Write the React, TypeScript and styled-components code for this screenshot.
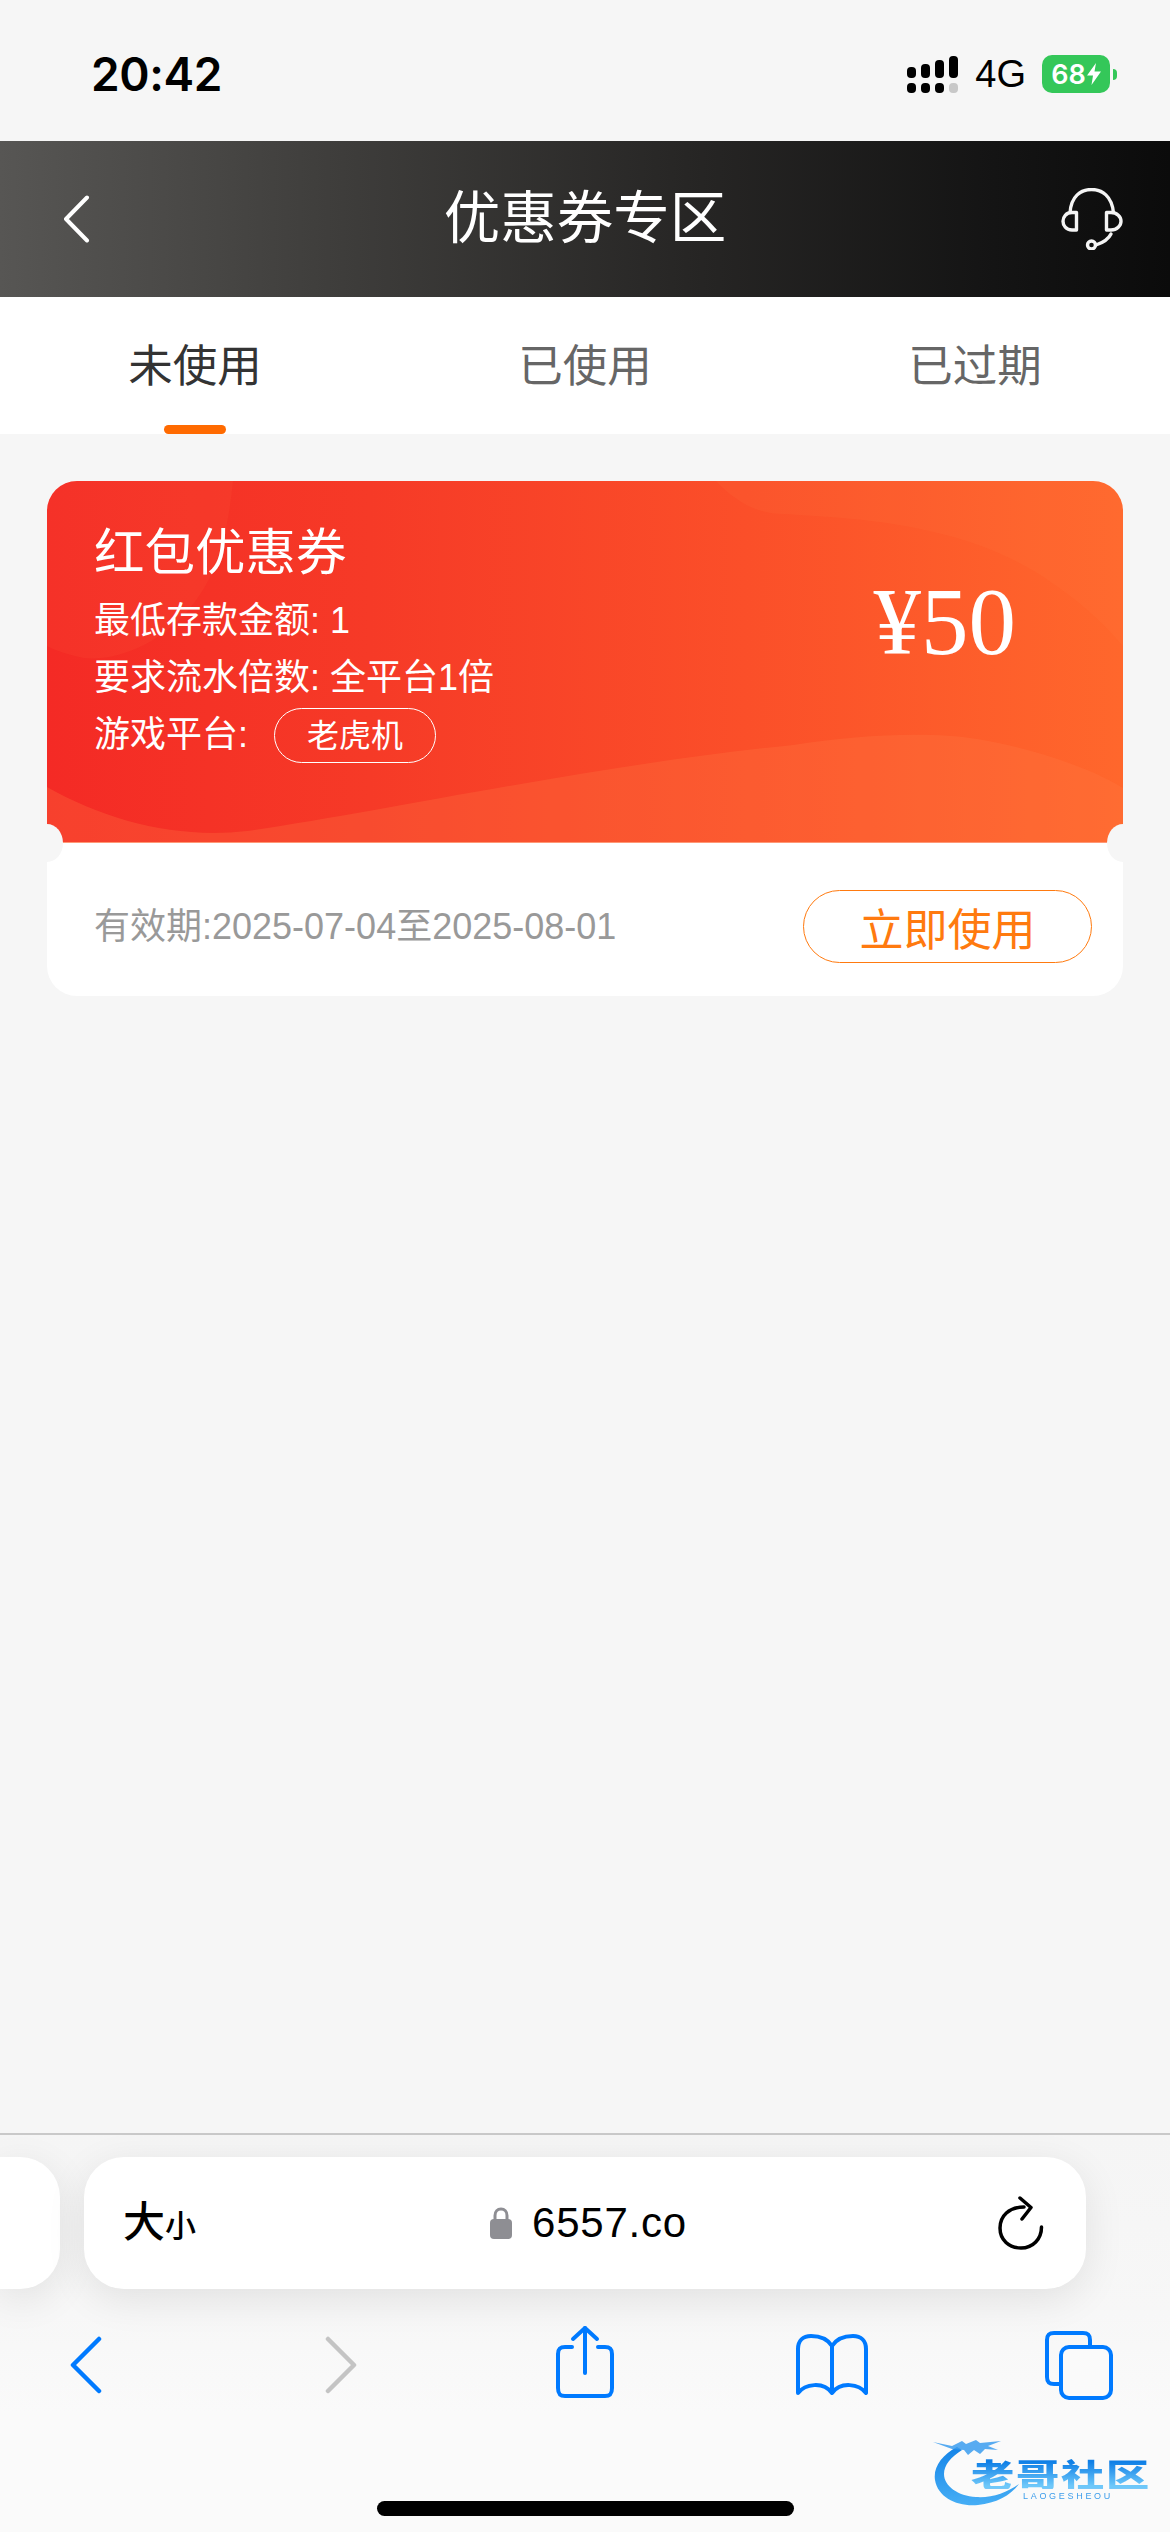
import * as React from 'react'
import styled, { createGlobalStyle } from 'styled-components'

const CJK = `"Liberation Sans", "Noto Sans CJK SC", sans-serif`

const GlobalStyle = createGlobalStyle`
  html, body {
    margin: 0;
    padding: 0;
    background: #f6f6f6;
  }
  * {
    box-sizing: border-box;
  }
`

const Page = styled.div`
  width: 1170px;
  height: 2532px;
  display: flex;
  flex-direction: column;
  position: relative;
  overflow: hidden;
  background: #f6f6f6;
  font-family: ${CJK};
`

const StatusBar = styled.div`
  height: 141px;
  flex: none;
  display: flex;
  align-items: center;
  justify-content: space-between;
  padding: 7px 60px 0 91px;
`

const Clock = styled.div`
  font-family: Inter, sans-serif;
  font-size: 46px;
  font-weight: 600;
  color: #000;
  letter-spacing: -0.4px;
`

const StatusRight = styled.div`
  display: flex;
  align-items: center;
`

const NetworkLabel = styled.span`
  font-size: 38px;
  color: #000;
  margin: 0 16px 0 17px;
  line-height: 38px;
`

const Battery = styled.div`
  width: 68px;
  height: 38px;
  border-radius: 10px;
  background: #34c759;
  position: relative;
  display: flex;
  align-items: center;
  justify-content: center;
  gap: 1px;
  color: #fff;
  font-family: Inter, sans-serif;
  font-size: 27px;
  font-weight: 600;

  &::after {
    content: '';
    position: absolute;
    right: -7px;
    top: 14px;
    width: 4px;
    height: 11px;
    border-radius: 0 5px 5px 0;
    background: #34c759;
  }
`

const Header = styled.header`
  height: 156px;
  flex: none;
  display: grid;
  grid-template-columns: 1fr auto 1fr;
  align-items: center;
  padding: 0 47px;
  background: linear-gradient(90deg, #575654 0%, #3f3e3c 28%, #262524 60%, #141414 85%, #0b0b0b 100%);
`

const HeaderSlot = styled.div<{ $end?: boolean }>`
  display: flex;
  justify-content: ${p => (p.$end ? 'flex-end' : 'flex-start')};
  padding-left: ${p => (p.$end ? 0 : 15)}px;
`

const HeaderTitle = styled.h1`
  margin: 0;
  font-size: 56.5px;
  font-weight: 400;
  color: #fff;
  line-height: 1;
`

const Tabs = styled.nav`
  height: 137px;
  flex: none;
  display: grid;
  grid-template-columns: repeat(3, 390px);
  background: #fff;
`

const Tab = styled.div<{ $active?: boolean }>`
  position: relative;
  display: flex;
  align-items: center;
  justify-content: center;
  padding-bottom: 6px;
  font-size: 44.5px;
  color: ${p => (p.$active ? '#333' : '#666')};

  ${p =>
    p.$active &&
    `&::after {
      content: '';
      position: absolute;
      left: 164px;
      bottom: 0;
      width: 62px;
      height: 9px;
      border-radius: 5px;
      background: #ff6a00;
    }`}
`

const Content = styled.main`
  flex: 1;
  padding: 47px 47px 0;
`

const Coupon = styled.section`
  position: relative;
  height: 515px;
  border-radius: 30px;
  overflow: hidden;
  display: flex;
  flex-direction: column;
  background: #fff;
`

const Notch = styled.span<{ $side: 'left' | 'right' }>`
  position: absolute;
  top: 343px;
  ${p => p.$side}: -16px;
  width: 32px;
  height: 38px;
  border-radius: 50%;
  background: #f6f6f6;
`

const CouponTop = styled.div`
  position: relative;
  height: 362px;
  flex: none;
  display: flex;
  justify-content: space-between;
  padding: 43px 107px 0 47px;
  color: #fff;
  background: linear-gradient(90deg, #f42a25 0%, #f63a27 30%, #fb4f29 65%, #ff672c 100%);
  border-bottom: 1px solid #ffa489;
`

const Waves = styled.svg`
  position: absolute;
  left: 0;
  top: 0;
  width: 1076px;
  height: 362px;
`

const CouponInfo = styled.div`
  position: relative;
  display: flex;
  flex-direction: column;
`

const CouponName = styled.div`
  font-size: 50.5px;
  line-height: 58px;
  margin-bottom: 21px;
`

const CouponLine = styled.div`
  font-size: 36px;
  line-height: 36px;
  height: 57px;
  display: flex;
  align-items: flex-start;
  white-space: pre;
`

const PlatformTag = styled.span`
  width: 162px;
  height: 55px;
  margin: -9px 0 0 26px;
  border: 1px solid #fff;
  border-radius: 28px;
  display: flex;
  align-items: center;
  justify-content: center;
  font-size: 32px;
`

const Amount = styled.div`
  position: relative;
  font-family: "Liberation Serif", serif;
  font-size: 95px;
  line-height: 95px;
  margin-top: 51px;
`

const CouponBottom = styled.div`
  flex: 1;
  display: flex;
  align-items: center;
  justify-content: space-between;
  padding: 14px 31px 0 47px;
`

const Validity = styled.span`
  font-size: 36px;
  color: #999;
  margin-bottom: 8px;
`

const UseButton = styled.button`
  width: 289px;
  height: 73px;
  padding: 0;
  border: 1px solid #ff7a0f;
  border-radius: 37px;
  background: #fff;
  color: #ff7a0f;
  font-family: inherit;
  font-size: 44px;
`

const Toolbar = styled.footer`
  height: 399px;
  flex: none;
  border-top: 2px solid #c9c9c9;
  background: linear-gradient(180deg, #f5f5f5 0%, #f7f7f7 45%, #fafafa 70%);
  display: flex;
  flex-direction: column;
`

const UrlRow = styled.div`
  height: 132px;
  margin-top: 22px;
  flex: none;
  display: grid;
  grid-template-columns: 60px 1002px;
  gap: 24px;
`

const SidePill = styled.div`
  border-radius: 0 40px 40px 0;
  background: #fff;
  box-shadow: 0 10px 40px rgba(0, 0, 0, 0.09);
`

const UrlPill = styled.div`
  border-radius: 40px;
  background: #fff;
  box-shadow: 0 10px 40px rgba(0, 0, 0, 0.09);
  display: grid;
  grid-template-columns: 1fr auto 1fr;
  align-items: center;
  padding: 0 42px 0 39px;
  color: #000;
`

const TextSize = styled.div`
  display: flex;
  align-items: baseline;
  font-weight: 500;
  font-size: 42px;
  line-height: 1;
`

const TextSizeSmall = styled.span`
  font-size: 31px;
`

const Domain = styled.div`
  display: flex;
  align-items: center;
  gap: 20px;
  margin-left: 10px;
  font-size: 42px;
  letter-spacing: 0.8px;
`

const ReloadSlot = styled.div`
  display: flex;
  justify-content: flex-end;
`

const NavRow = styled.div`
  position: relative;
  height: 90px;
  margin-top: 21px;
  flex: none;
`

const NavIcon = styled.svg<{ $x: number; $y: number }>`
  position: absolute;
  left: ${p => p.$x}px;
  top: ${p => p.$y}px;
`

const HomeBar = styled.div`
  width: 417px;
  height: 15px;
  margin: 101px 0 0 377px;
  border-radius: 8px;
  background: #000;
  flex: none;
`

const Watermark = styled.div`
  position: absolute;
  left: 930px;
  top: 2430px;
  width: 230px;
  height: 80px;
  filter: blur(0.7px);
`

const WatermarkTitle = styled.div`
  position: absolute;
  left: 41px;
  top: 25px;
  font-size: 36px;
  line-height: 36px;
  font-family: "Noto Sans CJK SC", sans-serif;
  font-weight: 900;
  letter-spacing: 1.5px;
  white-space: nowrap;
  transform: scale(1.2, 0.88);
  transform-origin: left center;
  background: linear-gradient(180deg, #0f7fe6 15%, #6ec8fa 90%);
  -webkit-background-clip: text;
  background-clip: text;
  color: transparent;
`

const WatermarkSub = styled.div`
  position: absolute;
  left: 93px;
  top: 62px;
  font-size: 9px;
  line-height: 9px;
  letter-spacing: 2.7px;
  color: #3d9deb;
  white-space: nowrap;
`

function SignalIcon() {
  const tops = [11, 8, 4, 0]
  return (
    <svg width="51" height="37" viewBox="0 0 51 37">
      {tops.map((t, i) => (
        <g key={i}>
          <rect x={i * 14} y={t} width="9" height={22 - t} rx="4" fill="#000" />
          <rect x={i * 14} y="27" width="9" height="10" rx="4" fill={i === 3 ? '#c8c8c8' : '#000'} />
        </g>
      ))}
    </svg>
  )
}

function BoltIcon() {
  return (
    <svg width="14" height="22" viewBox="0 0 14 22">
      <path d="M9 0 L0 12.5 H6 L4.5 22 L14 8.5 H7.5 Z" fill="#fff" />
    </svg>
  )
}

function BackIcon() {
  return (
    <svg width="28" height="48" viewBox="0 0 28 48" fill="none">
      <path d="M25 2.5 L4 24 L25 45.5" stroke="#fff" strokeWidth="4" strokeLinecap="round" strokeLinejoin="round" />
    </svg>
  )
}

function HeadsetIcon() {
  return (
    <svg width="62" height="62" viewBox="0 0 62 62" fill="none" stroke="#f4f4f4" strokeWidth="3.4">
      <path d="M9 25 C10 8 20 1.5 30.5 1.5 C41 1.5 51 8 52.5 25" />
      <path d="M15.5 24.5 V42 H11 C5 42 2 37.5 2 33.2 C2 29 5 24.5 11 24.5 Z" strokeLinejoin="round" />
      <path d="M45.5 24.5 V42 H50 C56 42 60 37.5 60 33.2 C60 29 56 24.5 50 24.5 Z" strokeLinejoin="round" />
      <path d="M50 46 C47 52 41 55 35 57" strokeLinecap="round" />
      <circle cx="30.5" cy="57" r="4" />
    </svg>
  )
}

function LockIcon() {
  return (
    <svg width="22" height="32" viewBox="0 0 22 32" fill="none">
      <path d="M5 14 V8.5 C5 4.5 7.5 2 11 2 C14.5 2 17 4.5 17 8.5 V14" stroke="#8e8e93" strokeWidth="3" />
      <rect x="0" y="12" width="22" height="20" rx="4" fill="#8e8e93" />
    </svg>
  )
}

function ReloadIcon() {
  return (
    <svg width="46" height="54" viewBox="0 0 46 54" fill="none" stroke="#000" strokeWidth="3.5" strokeLinecap="round" strokeLinejoin="round">
      <path d="M26 11 C11 11 2 20 2 32 C2 44 11 52 23 52 C35 52 43.5 43 43.5 31" />
      <path d="M22 2 L33 11.5 L24 23" />
    </svg>
  )
}

function Logo() {
  return (
    <svg width="110" height="80" viewBox="0 0 110 80">
      <defs>
        <linearGradient id="swoosh" x1="0" y1="0" x2="0" y2="1">
          <stop offset="0" stopColor="#1484e8" />
          <stop offset="1" stopColor="#46aef5" />
        </linearGradient>
      </defs>
      <path
        d="M27 17 C12 25 3 37 5 50 C8 68 28 77 48 75 C66 73 80 66 89 54 C76 63 62 68 46 67 C28 66 14 56 14 44 C14 35 21 27 32 20 Z"
        fill="url(#swoosh)"
      />
      <path
        d="M3 12 L22 16 L32 11 L36 14 L46 10 L50 13 L71 11 L58 16 L68 20 L55 19 L50 24 L44 20 L38 25 L34 20 L22 19 Z"
        fill="#3a9cee"
        opacity="0.85"
      />
    </svg>
  )
}

export default function App() {
  return (
    <Page>
      <GlobalStyle />
      <StatusBar>
        <Clock>20:42</Clock>
        <StatusRight>
          <SignalIcon />
          <NetworkLabel>4G</NetworkLabel>
          <Battery>
            68
            <BoltIcon />
          </Battery>
        </StatusRight>
      </StatusBar>

      <Header>
        <HeaderSlot>
          <BackIcon />
        </HeaderSlot>
        <HeaderTitle>优惠券专区</HeaderTitle>
        <HeaderSlot $end>
          <HeadsetIcon />
        </HeaderSlot>
      </Header>

      <Tabs>
        <Tab $active>未使用</Tab>
        <Tab>已使用</Tab>
        <Tab>已过期</Tab>
      </Tabs>

      <Content>
        <Coupon>
          <CouponTop>
            <Waves viewBox="0 0 1076 362">
              <path d="M0 0 H186 C180 60 168 95 147 122 C115 165 60 185 28 175 C15 172 6 168 0 165 Z" fill="#ff7a45" opacity="0.1" />
              <path d="M669 0 C690 22 712 33 736 33 C790 36 860 40 923 61 C955 72 980 85 998 97 C1030 118 1055 140 1076 165 V0 Z" fill="#ff8a50" opacity="0.1" />
              <path d="M0 306 C60 340 130 358 200 350 C340 330 540 285 746 264 C810 254 880 250 930 258 C980 266 1040 285 1076 307 V362 H0 Z" fill="#ff7a45" opacity="0.28" />
            </Waves>
            <CouponInfo>
              <CouponName>红包优惠券</CouponName>
              <CouponLine>最低存款金额: 1</CouponLine>
              <CouponLine>要求流水倍数: 全平台1倍</CouponLine>
              <CouponLine>
                游戏平台:
                <PlatformTag>老虎机</PlatformTag>
              </CouponLine>
            </CouponInfo>
            <Amount>¥50</Amount>
          </CouponTop>
          <CouponBottom>
            <Validity>有效期:2025-07-04至2025-08-01</Validity>
            <UseButton>立即使用</UseButton>
          </CouponBottom>
          <Notch $side="left" />
          <Notch $side="right" />
        </Coupon>
      </Content>

      <Toolbar>
        <UrlRow>
          <SidePill />
          <UrlPill>
            <TextSize>
              大<TextSizeSmall>小</TextSizeSmall>
            </TextSize>
            <Domain>
              <LockIcon />
              6557.co
            </Domain>
            <ReloadSlot>
              <ReloadIcon />
            </ReloadSlot>
          </UrlPill>
        </UrlRow>
        <NavRow>
          <NavIcon $x={69} $y={26} width="34" height="58" viewBox="0 0 34 58" fill="none" stroke="#007aff" strokeWidth="4.5" strokeLinecap="round" strokeLinejoin="round">
            <path d="M30 3 L4 29 L30 55" />
          </NavIcon>
          <NavIcon $x={324} $y={26} width="34" height="58" viewBox="0 0 34 58" fill="none" stroke="#c4c4c4" strokeWidth="4.5" strokeLinecap="round" strokeLinejoin="round">
            <path d="M4 3 L30 29 L4 55" />
          </NavIcon>
          <NavIcon $x={555} $y={15} width="60" height="74" viewBox="0 0 60 74" fill="none" stroke="#007aff" strokeWidth="4" strokeLinecap="round" strokeLinejoin="round">
            <path d="M17 22 H10 C5 22 3 24 3 29 V63 C3 69 5 71 10 71 H50 C55 71 57 69 57 63 V29 C57 24 55 22 50 22 H43" />
            <path d="M30 48 V3" />
            <path d="M18 14 L30 3 L42 14" />
          </NavIcon>
          <NavIcon $x={795} $y={24} width="74" height="62" viewBox="0 0 74 62" fill="none" stroke="#007aff" strokeWidth="4" strokeLinejoin="round">
            <path d="M37 12 C32 4 24 2 16 2 C8 2 3 7 3 15 V59 C10 50 28 47 37 59 C46 47 64 50 71 59 V15 C71 7 66 2 58 2 C50 2 42 4 37 12 Z" />
            <path d="M37 12 V59" />
          </NavIcon>
          <NavIcon $x={1044} $y={20} width="70" height="70" viewBox="0 0 70 70" fill="none" stroke="#007aff" strokeWidth="4">
            <path d="M15 54 H10 C5 54 3 52 3 47 V10 C3 5 5 3 10 3 H39 C44 3 46 5 46 10 V16" />
            <rect x="17" y="17" width="50" height="51" rx="8" fill="#fafafa" />
          </NavIcon>
        </NavRow>
        <HomeBar />
      </Toolbar>

      <Watermark>
        <Logo />
        <WatermarkTitle>老哥社区</WatermarkTitle>
        <WatermarkSub>LAOGESHEOU</WatermarkSub>
      </Watermark>
    </Page>
  )
}
